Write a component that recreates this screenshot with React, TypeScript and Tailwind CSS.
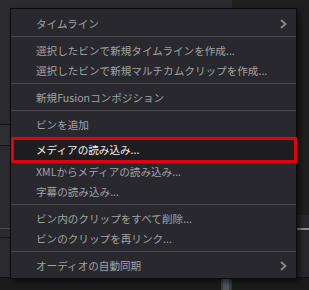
import React from 'react'

type Item = { label: string; sub?: boolean; active?: boolean } | 'sep'

const Chevron = () => (
  <svg width="7" height="10" viewBox="0 0 7 10" className="shrink-0">
    <path d="M1 1 L5.5 5 L1 9" fill="none" stroke="#8c8c8c" strokeWidth="1.8" />
  </svg>
)

const items: Item[] = [
  { label: 'タイムライン', sub: true },
  'sep',
  { label: '選択したビンで新規タイムラインを作成...' },
  { label: '選択したビンで新規マルチカムクリップを作成...' },
  'sep',
  { label: '新規Fusionコンポジション' },
  'sep',
  { label: 'ビンを追加' },
  { label: 'メディアの読み込み...', active: true },
  { label: 'XMLからメディアの読み込み...' },
  { label: '字幕の読み込み...' },
  'sep',
  { label: 'ビン内のクリップをすべて削除...' },
  { label: 'ビンのクリップを再リンク...' },
  'sep',
  { label: 'オーディオの自動同期', sub: true },
]

export default function App() {
  return (
    <div
      className="relative w-[309px] h-[290px] flex flex-col bg-[#1e1e1e] overflow-hidden"
      style={{ fontFamily: '"Noto Sans CJK JP", "Noto Sans", sans-serif' }}
    >
      {/* background panels */}
      <div className="flex flex-1">
        <div className="w-[232px] bg-[#2a2a30] flex flex-col">
          <div className="h-[124px]" />
          <div className="h-px bg-[#141416]" />
          <div className="h-[20px] bg-[#2d2d32]" />
          <div className="h-px bg-[#141416]" />
          <div className="h-[82px]" />
          <div className="h-px bg-[#4a4a50]" />
          <div className="h-[8px]" />
          <div className="h-px bg-[#161618]" />
        </div>
        <div className="flex-1 flex flex-col bg-[#1f1f1f]">
          <div className="h-[215px]" />
          <div className="flex-1 bg-[#28282c] flex flex-col">
            <div className="h-[13px]" />
            <div className="h-[2px] bg-[#8a8a8a] ml-[64px]" />
          </div>
        </div>
      </div>
      <div className="h-[13px] flex bg-[#1b1b1b] border-t border-[#111]">
        <div className="w-[221px]" />
        <div className="w-[10px] bg-[#4f545b] border-x-[2px] border-[#3a3d42]" />
        <div className="flex-1 border-l border-[#333]" />
      </div>

      {/* context menu */}
      <div className="absolute left-[10px] top-[8px] w-[287px] border border-[#0b0b0b] bg-[#28282e] pt-[5px] pb-[2px] shadow-[3px_3px_5px_rgba(0,0,0,0.55)] text-[10.6px] text-[#a3a3a3]">
        {items.map((it, i) => {
          if (it === 'sep') {
            const next = items[i + 1]
            // the separator above the highlighted row sits under the red frame
            if (next !== 'sep' && next?.active) return null
            return (
              <div key={i} className="pt-[2px] pb-[4px]">
                <div className="h-px bg-[#4a4a50]" />
              </div>
            )
          }
          if (it.active) {
            return (
              <div
                key={i}
                className="mt-[2px] -mb-px -mr-px h-[26px] border-[3px] border-[#e5000f] bg-[#1d1d1f] flex items-center pl-[22px] text-[#f4f4f4] leading-none"
              >
                {it.label}
              </div>
            )
          }
          return (
            <div key={i} className="h-[20px] flex items-center justify-between pl-[25px] pr-[9px] leading-none">
              <span>{it.label}</span>
              {it.sub && <Chevron />}
            </div>
          )
        })}
      </div>
    </div>
  )
}
